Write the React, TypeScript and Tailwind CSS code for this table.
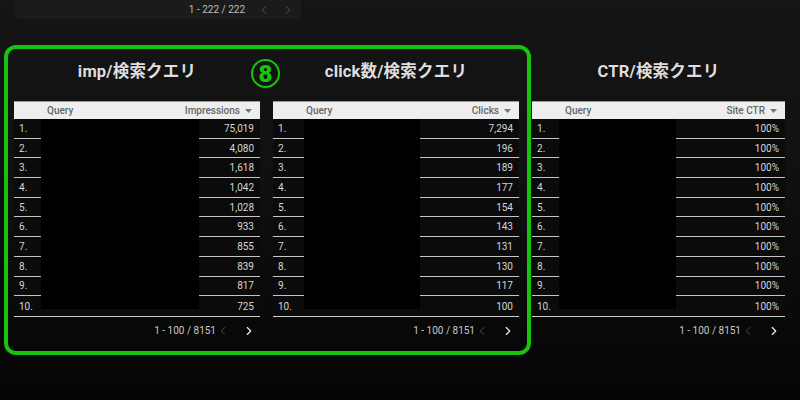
import React from "react";
import { ChevronLeft, ChevronRight } from "lucide-react";

type Col = {
  title: string;
  metric: string;
  values: string[];
  w: number;
  idxW: number;
  qW: number;
};

const cols: Col[] = [
  {
    title: "imp/検索クエリ",
    metric: "Impressions",
    values: ["75,019", "4,080", "1,618", "1,042", "1,028", "933", "855", "839", "817", "725"],
    w: 246,
    idxW: 27,
    qW: 158,
  },
  {
    title: "click数/検索クエリ",
    metric: "Clicks",
    values: ["7,294", "196", "189", "177", "154", "143", "131", "130", "117", "100"],
    w: 246,
    idxW: 31,
    qW: 116,
  },
  {
    title: "CTR/検索クエリ",
    metric: "Site CTR",
    values: Array(10).fill("100%"),
    w: 253,
    idxW: 27,
    qW: 117,
  },
];

function Table({ c }: { c: Col }) {
  return (
    <div className="flex flex-col" style={{ width: c.w }}>
      <div className="mt-[41px] h-[24px] flex items-center justify-center text-[16.5px] font-bold text-[#dedede] leading-none tracking-[0.2px]">
        {c.title}
      </div>
      <div className="mt-[17px] h-[18px] bg-[#eeeeee] border-t border-[#9a9a9a] flex items-center text-[10px] font-medium text-[#666666]">
        <div className="pl-[33px] flex-1">Query</div>
        <div className="flex items-center pr-[8px] gap-[5px]">
          <span>{c.metric}</span>
          <svg width="7" height="4" viewBox="0 0 7 4">
            <path d="M0 0 L7 0 L3.5 4 Z" fill="#777" />
          </svg>
        </div>
      </div>
      <div className="flex flex-col">
        {c.values.map((v, i) => {
          const last = i === 9;
          return (
            <div key={i} className="flex h-[19.7px] text-[10px] text-[#d6d6d6]">
              <div
                className={`h-full bg-[#0b0b0b] flex items-center pl-[5px] ${last ? "" : "border-b border-[#c4c4c4]"}`}
                style={{ width: c.idxW }}
              >
                {i + 1}.
              </div>
              <div className="h-full bg-[#0b0b0b]" style={{ width: c.qW }}>
                <div className={`w-full bg-black ${last ? "h-[13px]" : "h-full"}`} />
              </div>
              <div
                className={`h-full flex-1 bg-[#0b0b0b] flex items-center justify-end pr-[6px] ${last ? "" : "border-b border-[#c4c4c4]"}`}
              >
                {v}
              </div>
            </div>
          );
        })}
        <div className="h-px bg-[#d0d0d0]" />
      </div>
      <div className="mt-[4px] h-[20px] flex items-center justify-end pr-[4px] text-[10px] text-[#c8c8c8]">
        <span>1 - 100 / 8151</span>
        <ChevronLeft size={14} strokeWidth={1.5} className="ml-[0px] text-[#555555]" />
        <ChevronRight size={14} strokeWidth={2} className="ml-[12px] text-[#eeeeee]" />
      </div>
    </div>
  );
}

export default function App() {
  return (
    <div
      className="relative w-[800px] h-[400px] overflow-hidden"
      style={{
        fontFamily: "Roboto, 'Noto Sans CJK JP', sans-serif",
        background: "linear-gradient(to bottom, #151515 0%, #111111 40%, #0a0a0a 75%, #050505 100%)",
      }}
    >
      <div className="ml-[14px] w-[287px] h-[19px] bg-[#1b1b1b] rounded-b-[6px] flex items-center justify-end pr-[6px] text-[10px] text-[#bdbdbd]">
        <span>1 - 222 / 222</span>
        <ChevronLeft size={14} strokeWidth={1.5} className="ml-[12px] text-[#5a5a5a]" />
        <ChevronRight size={14} strokeWidth={1.5} className="ml-[10px] text-[#5a5a5a]" />
      </div>
      <div className="ml-[14px] flex gap-[13px]">
        {cols.map((c) => (
          <Table key={c.title} c={c} />
        ))}
      </div>

      <div className="absolute left-[4px] top-[45px] w-[527px] h-[310px] border-[4px] border-[#16c40e] rounded-[12px] pointer-events-none" />
      <div className="absolute left-[251px] top-[59px] w-[29px] h-[29px] rounded-full border-[2px] border-[#16c40e] flex items-center justify-center text-[#16c40e] text-[24px] font-black leading-none">
        8
      </div>
    </div>
  );
}
